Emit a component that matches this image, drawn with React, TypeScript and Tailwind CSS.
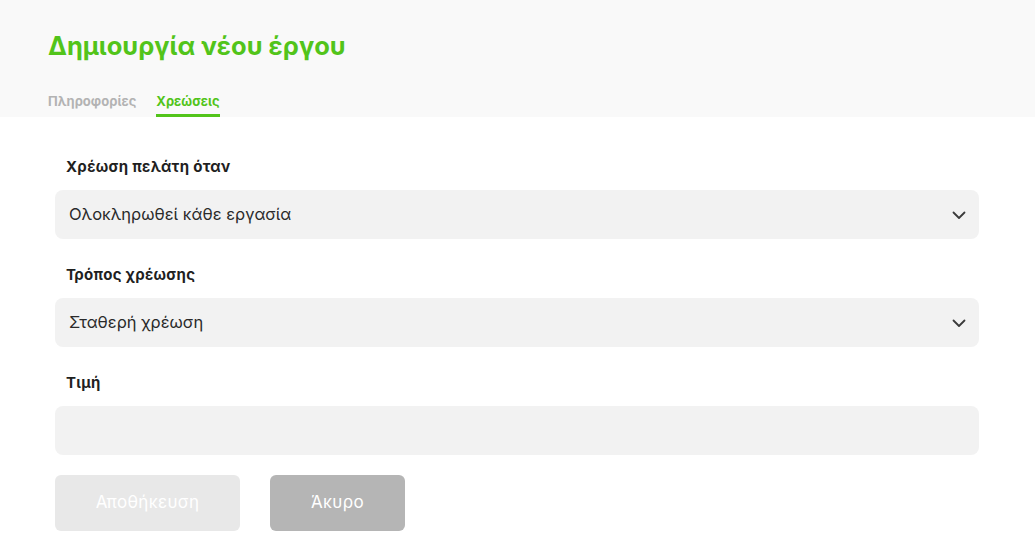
import React from "react";

function Chevron() {
  return (
    <svg width="16" height="16" viewBox="0 0 16 16" fill="none" className="shrink-0">
      <path d="M2.5 5.5 L8 11 L13.5 5.5" stroke="#3a3a3a" strokeWidth="1.8" strokeLinecap="round" strokeLinejoin="round" />
    </svg>
  );
}

function Field({ label, children }: { label: string; children: React.ReactNode }) {
  return (
    <div className="flex flex-col">
      <div className="text-[15px] font-bold text-[#1f1f1f] leading-[20px] tracking-[0.3px] pl-[11px] mb-[13px]">{label}</div>
      {children}
    </div>
  );
}

function Select({ value }: { value: string }) {
  return (
    <div className="h-[49px] rounded-[8px] bg-[#f2f2f2] flex items-center justify-between pl-[14px] pr-[12px]">
      <span className="text-[16.5px] text-[#2a2a2a]">{value}</span>
      <Chevron />
    </div>
  );
}

export default function App() {
  return (
    <div className="w-[1035px] h-[559px] bg-white" style={{ fontFamily: "Inter, 'Noto Sans', sans-serif" }}>
      <div className="bg-[#f9f9f9] h-[117px] pl-[48px] flex flex-col">
        <h1 className="text-[25.5px] font-bold text-[#52c41a] mt-[30px] leading-[32px]">Δημιουργία νέου έργου</h1>
        <div className="flex gap-[20px] mt-[26px]">
          <div className="text-[13px] font-bold text-[#b3b3b3] pt-[4px] h-[29px]">Πληροφορίες</div>
          <div className="text-[13px] font-bold text-[#52c41a] pt-[4px] h-[29px] border-b-[3px] border-[#52c41a]">Χρεώσεις</div>
        </div>
      </div>
      <div className="pl-[55px] pr-[56px] pt-[40px] flex flex-col gap-[26px]">
        <Field label="Χρέωση πελάτη όταν">
          <Select value="Ολοκληρωθεί κάθε εργασία" />
        </Field>
        <Field label="Τρόπος χρέωσης">
          <Select value="Σταθερή χρέωση" />
        </Field>
        <Field label="Τιμή">
          <div className="h-[49px] rounded-[8px] bg-[#f2f2f2]" />
        </Field>
      </div>
      <div className="pl-[55px] mt-[20px] flex gap-[30px]">
        <button className="w-[185px] h-[56px] rounded-[6px] bg-[#e8e8e8] text-white text-[17px] tracking-[0.3px]">Αποθήκευση</button>
        <button className="w-[135px] h-[56px] rounded-[6px] bg-[#b5b5b5] text-white text-[17px] tracking-[0.3px]">Άκυρο</button>
      </div>
    </div>
  );
}
